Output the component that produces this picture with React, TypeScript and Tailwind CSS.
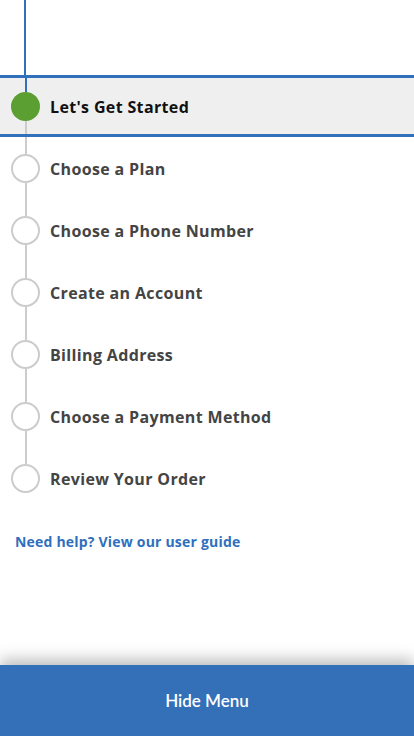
import React from "react";

const steps = [
  "Let's Get Started",
  "Choose a Plan",
  "Choose a Phone Number",
  "Create an Account",
  "Billing Address",
  "Choose a Payment Method",
  "Review Your Order",
];

export default function App() {
  return (
    <div
      className="relative w-[414px] h-[736px] bg-white overflow-hidden"
      style={{ fontFamily: "'Open Sans', Lato, sans-serif" }}
    >
      <div className="h-[75px] pl-[24px]">
        <div className="w-[2px] h-full bg-[#3170ba]" />
      </div>
      <ul>
        {steps.map((s, i) => {
          const active = i === 0;
          const last = i === steps.length - 1;
          return (
            <li
              key={s}
              className={
                active
                  ? "flex h-[62px] border-y-[3px] border-[#3170ba] bg-[#efefef]"
                  : "flex h-[62px]"
              }
            >
              <div className="flex w-[50px] flex-col items-center pl-[1px]">
                <div
                  className={
                    i === 0
                      ? "w-[2px] flex-1 bg-[#3170ba]"
                      : "w-[2px] flex-1 bg-[#cccccc]"
                  }
                />
                {active ? (
                  <div className="h-[29px] w-[29px] rounded-full bg-[#5b9e32]" />
                ) : (
                  <div className="h-[29px] w-[29px] rounded-full border-2 border-[#cccccc] bg-white" />
                )}
                <div
                  className={
                    last ? "w-[2px] flex-1" : "w-[2px] flex-1 bg-[#cccccc]"
                  }
                />
              </div>
              <div
                className={
                  active
                    ? "flex items-center pt-[2px] text-[16px] font-bold tracking-[0.35px] text-[#111111]"
                    : "flex items-center pt-[2px] text-[16px] font-bold tracking-[0.35px] text-[#444444]"
                }
              >
                {s}
              </div>
            </li>
          );
        })}
      </ul>
      <div className="pl-[15px] pt-[20px]">
        <a className="text-[14px] font-bold tracking-[0.2px] text-[#2f6fbd]">
          Need help? View our user guide
        </a>
      </div>
      <div
        className="absolute bottom-0 left-0 right-0 flex h-[71px] items-center justify-center bg-[#3370b8] text-[17px] font-semibold text-white shadow-[0_-6px_14px_rgba(0,0,0,0.25)]"
        style={{ fontFamily: "Lato, sans-serif" }}
      >
        Hide Menu
      </div>
    </div>
  );
}
